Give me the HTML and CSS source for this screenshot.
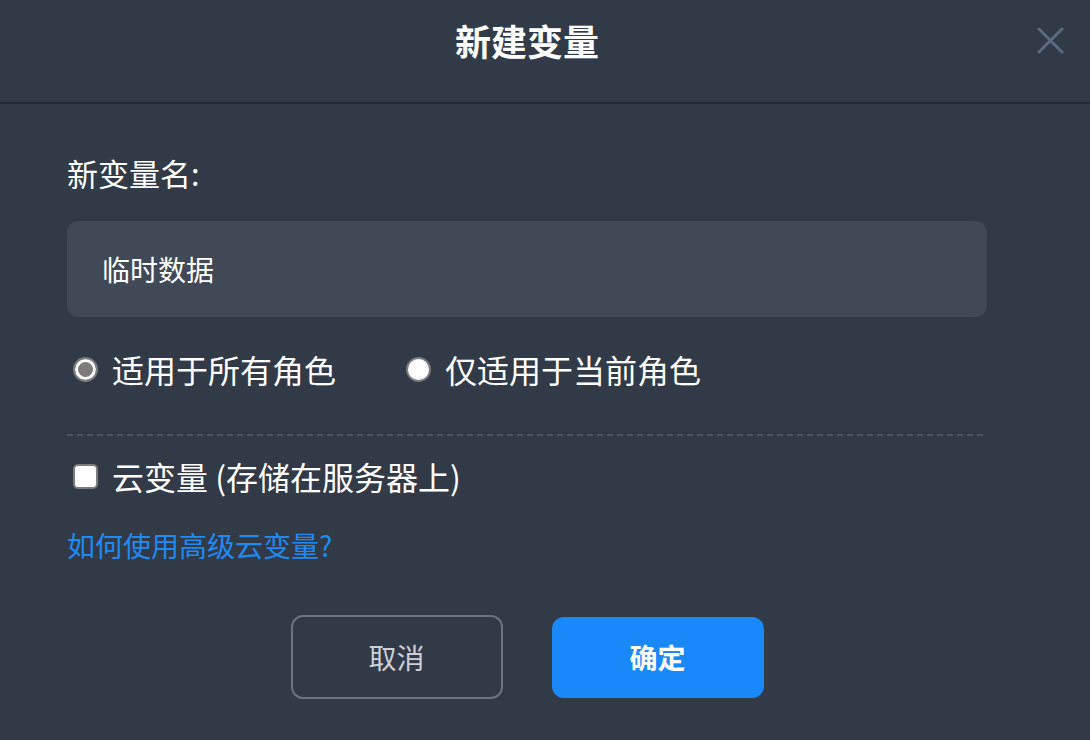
FILE: index.html
```html
<!DOCTYPE html>
<html lang="zh-CN">
<head>
    <meta charset="UTF-8">
    <meta name="viewport" content="width=device-width, initial-scale=1.0">
    <title>新建变量</title>
    <link rel="stylesheet" href="styles.css">
</head>
<body>
    <div class="dialog">
        <div class="dialog-header">
            <h1 class="dialog-title">新建变量</h1>
            <button class="close" aria-label="关闭">
                <svg width="27" height="27" viewBox="0 0 27 27">
                    <path d="M2 2 L25 25 M25 2 L2 25" stroke="#5a6a83" stroke-width="3" stroke-linecap="round" fill="none"/>
                </svg>
            </button>
        </div>

        <div class="dialog-body">
            <div class="field-label">新变量名:</div>
            <div class="text-input">临时数据</div>

            <div class="scope-row">
                <label class="option">
                    <input type="radio" name="scope" checked>
                    <span>适用于所有角色</span>
                </label>
                <label class="option">
                    <input type="radio" name="scope">
                    <span>仅适用于当前角色</span>
                </label>
            </div>

            <div class="divider"></div>

            <label class="option cloud">
                <input type="checkbox">
                <span>云变量 (存储在服务器上)</span>
            </label>

            <a class="help-link" href="#">如何使用高级云变量?</a>

            <div class="actions">
                <button class="btn btn-cancel">取消</button>
                <button class="btn btn-ok">确定</button>
            </div>
        </div>
    </div>
</body>
</html>
```

FILE: styles.css
```css
body {
    margin: 0;
    background-color: #323a48;
    font-family: "Noto Sans CJK SC", "Noto Sans", sans-serif;
    color: white;
    overflow: hidden;
}

.dialog {
    width: 1090px;
    height: 740px;
}

.dialog-header {
    position: relative;
    height: 104px;
    box-sizing: border-box;
    border-bottom: 2px solid #252b36;
    display: flex;
    justify-content: center;
    align-items: flex-start;
    padding: 18px 36px 0 0;
}

.dialog-title {
    margin: 0;
    font-size: 36px;
    font-weight: bold;
    line-height: 44px;
}

.close {
    position: absolute;
    top: 27px;
    right: 26px;
    width: 27px;
    height: 27px;
    padding: 0;
    border: none;
    background: none;
    cursor: pointer;
}

.dialog-body {
    width: 920px;
    padding: 49px 0 0 67px;
    display: flex;
    flex-direction: column;
}

.field-label {
    font-size: 31px;
    line-height: 40px;
}

.text-input {
    margin-top: 28px;
    height: 96px;
    box-sizing: border-box;
    padding: 0 35px;
    border-radius: 12px;
    background-color: #414957;
    font-size: 28px;
    display: flex;
    align-items: center;
}

.scope-row {
    margin-top: 32px;
    display: flex;
    gap: 64px;
}

.option {
    display: flex;
    align-items: center;
    gap: 14px;
    padding-left: 6px;
    font-size: 32px;
    line-height: 40px;
    cursor: pointer;
}

.option input {
    appearance: none;
    margin: 0;
    width: 25px;
    height: 25px;
    box-sizing: border-box;
    border: 2px solid #7c7c7c;
    background-color: white;
}

.option input[type="radio"] {
    border-radius: 50%;
}

.option input[type="radio"]:checked {
    background-color: #7c7c7c;
    box-shadow: inset 0 0 0 3px white;
}

.option input[type="checkbox"] {
    border-radius: 5px;
}

.divider {
    margin-top: 45px;
    height: 2px;
    background: repeating-linear-gradient(to right, #485365 0 6px, transparent 6px 10px);
}

.cloud {
    margin-top: 20px;
}

.help-link {
    margin-top: 29px;
    align-self: flex-start;
    font-size: 28px;
    line-height: 40px;
    color: #1d8bf3;
    text-decoration: none;
}

.actions {
    margin-top: 50px;
    display: flex;
    justify-content: center;
    align-items: center;
    gap: 49px;
}

.btn {
    width: 212px;
    height: 81px;
    border-radius: 12px;
    font-family: inherit;
    font-size: 28px;
    cursor: pointer;
}

.btn-cancel {
    height: 84px;
    border: 2px solid #6c727e;
    background: transparent;
    color: #cdd0d5;
}

.btn-ok {
    border: none;
    background-color: #1989fa;
    color: white;
    font-weight: bold;
}
```
